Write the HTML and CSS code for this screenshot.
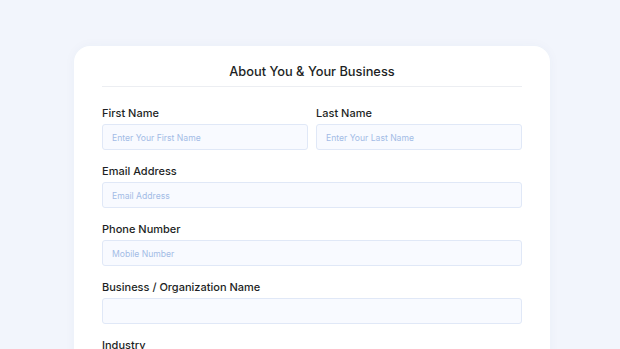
FILE: index.html
```html
<!DOCTYPE html>
<html lang="en">

<head>
    <meta charset="UTF-8">
    <meta name="viewport" content="width=device-width, initial-scale=1.0">
    <title>About You &amp; Your Business</title>
    <link rel="stylesheet" href="styles.css">
</head>

<body>
    <div class="page">
        <form class="card" id="businessForm">
            <h2 class="card-title">About You &amp; Your Business</h2>

            <div class="row">
                <div class="field">
                    <label for="firstName">First Name</label>
                    <input type="text" id="firstName" name="firstName" placeholder="Enter Your First Name">
                </div>
                <div class="field">
                    <label for="lastName">Last Name</label>
                    <input type="text" id="lastName" name="lastName" placeholder="Enter Your Last Name">
                </div>
            </div>

            <div class="field">
                <label for="email">Email Address</label>
                <input type="email" id="email" name="email" placeholder="Email Address">
            </div>

            <div class="field">
                <label for="phone">Phone Number</label>
                <input type="text" id="phone" name="phone" placeholder="Mobile Number">
            </div>

            <div class="field">
                <label for="business">Business / Organization Name</label>
                <input type="text" id="business" name="business">
            </div>

            <div class="field">
                <label for="industry">Industry</label>
                <input type="text" id="industry" name="industry">
            </div>
        </form>
    </div>
</body>

</html>
```

FILE: styles.css
```css
html,
body {
    margin: 0;
    height: 100%;
    overflow: hidden;
}

body {
    font-family: Inter, "Noto Sans", sans-serif;
    background-color: #f2f5fc;
    color: #1d1f24;
}

.page {
    padding-top: 46px;
    display: flex;
    justify-content: center;
}

.card {
    width: 476px;
    box-sizing: border-box;
    margin-left: 4px;
    padding: 16px 28px 40px 28px;
    background-color: #fff;
    border-radius: 16px;
    box-shadow: 0 0 12px rgba(60, 80, 140, 0.04);
    display: flex;
    flex-direction: column;
    gap: 14px;
}

.card-title {
    margin: 0 0 5px 0;
    padding-bottom: 4px;
    border-bottom: 1px solid #eceef2;
    text-align: center;
    font-size: 12.8px;
    line-height: 20px;
    font-weight: 500;
}

.row {
    display: flex;
    gap: 8px;
}

.row .field {
    flex: 1;
}

.field {
    display: flex;
    flex-direction: column;
    gap: 4px;
}

label {
    font-size: 11px;
    line-height: 14px;
    font-weight: 500;
}

input {
    height: 26px;
    box-sizing: border-box;
    padding: 1px 9px 0 9px;
    border: 1px solid #e0e8f7;
    border-radius: 3px;
    background-color: #f8faff;
    font-family: inherit;
    font-size: 8.6px;
    color: #1d1f24;
    outline: none;
}

input::placeholder {
    color: #a3bce6;
}
```
